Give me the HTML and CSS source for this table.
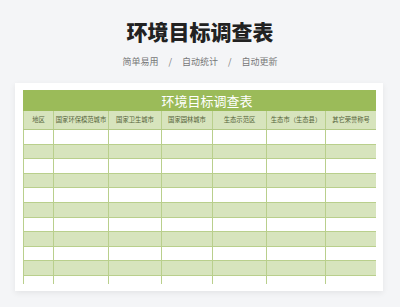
FILE: index.html
```html
<!DOCTYPE html>
<html lang="zh">
<head>
<meta charset="utf-8">
<title>环境目标调查表</title>
<link rel="stylesheet" href="styles.css">
</head>
<body>
<header class="hero">
  <h1 class="hero-title">环境目标调查表</h1>
  <div class="hero-sub">
    <span>简单易用</span><span class="sep">/</span><span>自动统计</span><span class="sep">/</span><span>自动更新</span>
  </div>
</header>
<main class="card">
  <div class="sheet">
    <table class="grid">
      <colgroup>
        <col class="c1"><col class="c2"><col class="c3"><col class="c4"><col class="c5"><col class="c6"><col class="c7">
      </colgroup>
      <thead>
        <tr class="title-row"><th colspan="7"><span class="title-text">环境目标调查表</span></th></tr>
        <tr class="head-row">
          <th>地区</th><th>国家环保模范城市</th><th>国家卫生城市</th><th>国家园林城市</th><th>生态示范区</th><th>生态市（生态县）</th><th>其它荣誉称号</th>
        </tr>
      </thead>
      <tbody>
        <tr><td></td><td></td><td></td><td></td><td></td><td></td><td></td></tr>
        <tr class="alt"><td></td><td></td><td></td><td></td><td></td><td></td><td></td></tr>
        <tr><td></td><td></td><td></td><td></td><td></td><td></td><td></td></tr>
        <tr class="alt"><td></td><td></td><td></td><td></td><td></td><td></td><td></td></tr>
        <tr><td></td><td></td><td></td><td></td><td></td><td></td><td></td></tr>
        <tr class="alt"><td></td><td></td><td></td><td></td><td></td><td></td><td></td></tr>
        <tr><td></td><td></td><td></td><td></td><td></td><td></td><td></td></tr>
        <tr class="alt"><td></td><td></td><td></td><td></td><td></td><td></td><td></td></tr>
        <tr><td></td><td></td><td></td><td></td><td></td><td></td><td></td></tr>
        <tr class="alt"><td></td><td></td><td></td><td></td><td></td><td></td><td></td></tr>
        <tr><td></td><td></td><td></td><td></td><td></td><td></td><td></td></tr>
        <tr class="alt"><td></td><td></td><td></td><td></td><td></td><td></td><td></td></tr>
      </tbody>
    </table>
  </div>
</main>
</body>
</html>
```
FILE: styles.css
```css
html, body {
  margin: 0;
  padding: 0;
}
body {
  background: #f4f5f7;
  font-family: "Noto Sans CJK SC", "Noto Sans", sans-serif;
  width: 400px;
  height: 307px;
  overflow: hidden;
}
.hero {
  padding-top: 20px;
  text-align: center;
}
.hero-title {
  margin: 0;
  font-size: 21px;
  line-height: 22px;
  font-weight: 900;
  color: #222222;
}
.hero-sub {
  margin-top: 14px;
  display: flex;
  justify-content: center;
  gap: 10px;
  font-size: 9px;
  line-height: 12px;
  color: #777777;
}
.card {
  margin: 15px 0 0 15px;
  width: 368px;
  height: 208px;
  box-sizing: border-box;
  padding: 7px 7px 7px 8px;
  background: #ffffff;
  box-shadow: 0 2px 6px rgba(0, 0, 0, 0.07);
}
.sheet {
  height: 194px;
  overflow: hidden;
}
.grid {
  width: 353px;
  border-collapse: collapse;
  table-layout: fixed;
}
.c1 { width: 30px; }
.c2 { width: 55px; }
.c3 { width: 53px; }
.c4 { width: 51px; }
.c5 { width: 54px; }
.c6 { width: 59px; }
.c7 { width: 51px; }
.grid th, .grid td {
  border: 1px solid #b9cf8c;
  padding: 0;
}
.title-row th {
  height: 19px;
  background: #9bbb59;
  border-color: #9bbb59;
  color: #ffffff;
  font-weight: 400;
  font-size: 13px;
  line-height: 17px;
  text-align: center;
}
.title-text {
  display: inline-block;
  padding-left: 14px;
}
.head-row th {
  height: 18px;
  background: #d7e4bd;
  color: #55633a;
  font-weight: 400;
  font-size: 6.3px;
  line-height: 10px;
  text-align: center;
  white-space: nowrap;
  border-bottom-color: #b2c985;
}
.grid tbody tr {
  height: 14.6px;
}
.grid tbody td {
  background: #ffffff;
}
.grid tbody tr.alt td {
  background: #d7e4bd;
}
```
